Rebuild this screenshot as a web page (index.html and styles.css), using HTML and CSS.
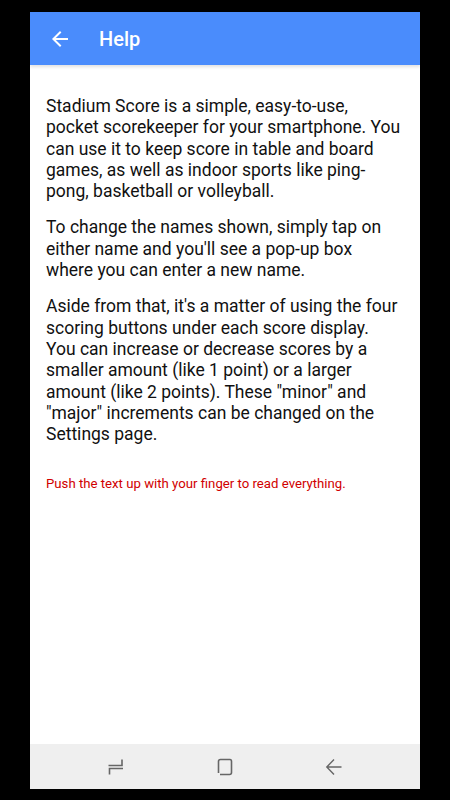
FILE: index.html
```html
<!DOCTYPE html>
<html lang="en">

<head>
    <meta charset="UTF-8">
    <meta name="viewport" content="width=device-width, initial-scale=1.0">
    <title>Help</title>
    <link rel="stylesheet" href="styles.css">
</head>

<body>
    <div class="phone">
        <div class="toolbar">
            <button class="back">
                <svg width="24" height="24" viewBox="0 0 24 24">
                    <path d="M20 11H7.83l5.59-5.59L12 4l-8 8 8 8 1.41-1.41L7.83 13H20v-2z" fill="#fff" />
                </svg>
            </button>
            <h1 class="title">Help</h1>
        </div>

        <div class="content">
            <p>Stadium Score is a simple, easy-to-use, pocket scorekeeper for your smartphone. You can use it to keep score in table and board games, as well as indoor sports like ping-pong, basketball or volleyball.</p>
            <p>To change the names shown, simply tap on either name and you'll see a pop-up box where you can enter a new name.</p>
            <p>Aside from that, it's a matter of using the four scoring buttons under each score display. You can increase or decrease scores by a smaller amount (like 1 point) or a larger amount (like 2 points). These "minor" and "major" increments can be changed on the Settings page.</p>
            <p class="hint">Push the text up with your finger to read everything.</p>
        </div>

        <div class="navbar">
            <svg class="nav-icon" width="18" height="18" viewBox="0 0 18 18">
                <path d="M15 1.5V7.5H1.5M16 10.5H2.5V16.5" fill="none" stroke="#666" stroke-width="1.6" />
            </svg>
            <svg class="nav-icon" width="18" height="18" viewBox="0 0 18 18">
                <path d="M2.5 15V3.5Q2.5 1.5 4.5 1.5H14Q15.5 1.5 15.5 3.5V14.5Q15.5 16.5 13.5 16.5H4" fill="none" stroke="#666" stroke-width="1.6" />
            </svg>
            <svg class="nav-icon" width="18" height="18" viewBox="0 0 18 18">
                <path d="M9 1.5L1.8 9L9 16.5M1.8 9H16.5" fill="none" stroke="#666" stroke-width="1.4" />
            </svg>
        </div>
    </div>
</body>

</html>
```

FILE: styles.css
```css
body {
    margin: 0;
    background-color: black;
    font-family: 'Roboto', 'Liberation Sans', sans-serif;
}

.phone {
    width: 390px;
    height: 777px;
    margin: 12px 0 0 30px;
    background-color: white;
    display: flex;
    flex-direction: column;
}

.toolbar {
    height: 53px;
    background-color: #4a8cfc;
    display: flex;
    align-items: center;
    padding: 0 0 0 18px;
    box-shadow: 0 2px 3px rgba(0, 0, 0, 0.12);
    flex-shrink: 0;
}

.back {
    width: 24px;
    height: 24px;
    padding: 0;
    border: none;
    background: none;
    display: flex;
}

.title {
    margin: 0 0 0 27px;
    font-size: 20px;
    font-weight: 500;
    color: white;
}

.content {
    flex: 1;
    padding: 31px 18.5px 0 16px;
    color: #111;
}

.content p {
    margin: 0 0 15px 0;
    font-size: 17.5px;
    line-height: 21.3px;
}

.content p.hint {
    margin-top: 28px;
    font-size: 13.2px;
    color: #d10000;
}

.navbar {
    height: 45px;
    background-color: #efefef;
    display: flex;
    justify-content: center;
    align-items: center;
    gap: 91px;
    flex-shrink: 0;
}
```
